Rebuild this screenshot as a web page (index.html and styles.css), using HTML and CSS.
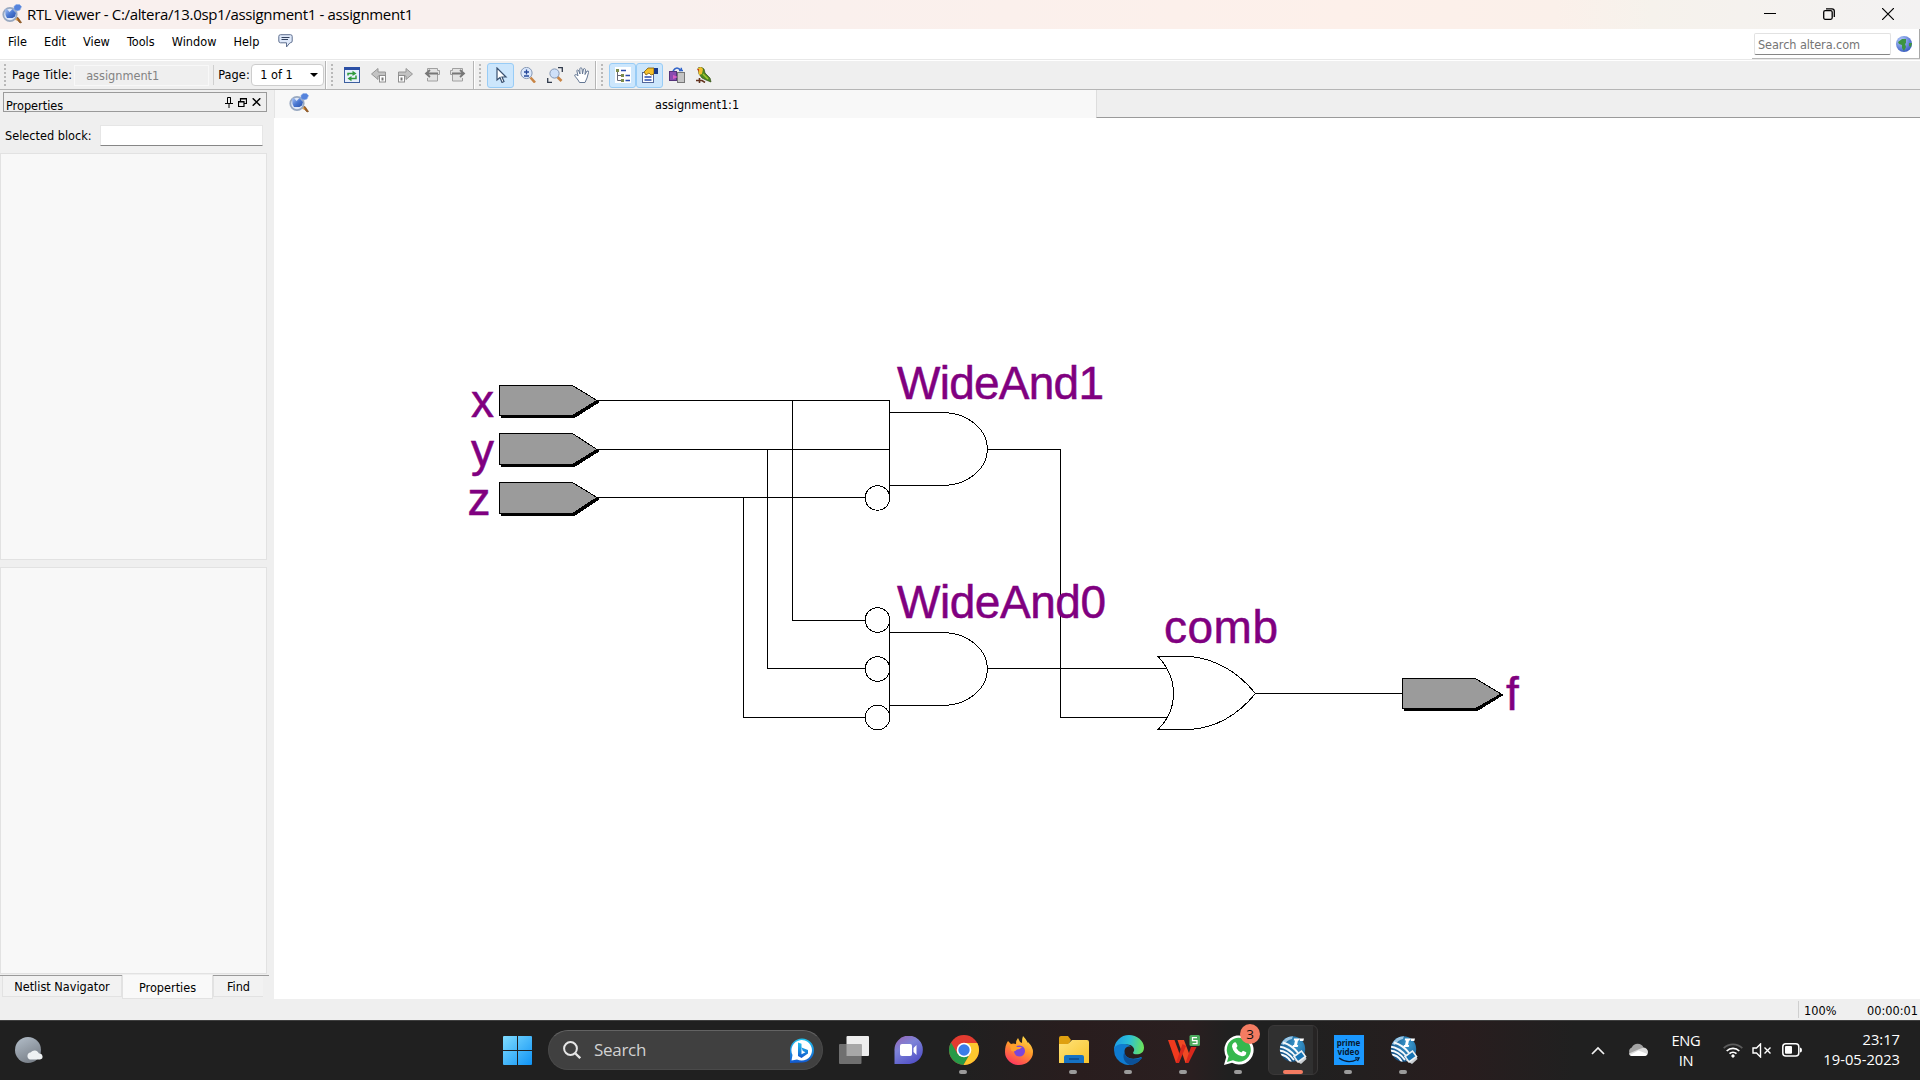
FILE: index.html
```html
<!DOCTYPE html>
<html lang="en">
<head>
<meta charset="utf-8">
<title>RTL Viewer - C:/altera/13.0sp1/assignment1 - assignment1</title>
<link rel="stylesheet" href="styles.css">
</head>
<body>
<svg class="defs" width="0" height="0">
  <defs>
    <linearGradient id="gBlue" x1="0" y1="0" x2="1" y2="1"><stop offset="0" stop-color="#a9c4f5"/><stop offset=".5" stop-color="#4a78d2"/><stop offset="1" stop-color="#2a52ab"/></linearGradient>
    <linearGradient id="gWin" x1="0" y1="0" x2="1" y2="1"><stop offset="0" stop-color="#7fdcff"/><stop offset="1" stop-color="#0f93f5"/></linearGradient>
    <linearGradient id="gChat" x1="0" y1="0" x2=".6" y2="1"><stop offset="0" stop-color="#9a62b0"/><stop offset=".45" stop-color="#7d83d8"/><stop offset="1" stop-color="#5453c8"/></linearGradient>
    <linearGradient id="gFolder" x1="0" y1="0" x2="1" y2="1"><stop offset="0" stop-color="#ffe27a"/><stop offset="1" stop-color="#f8c42c"/></linearGradient>
    <linearGradient id="gEdge" x1="0" y1=".3" x2="1" y2=".4"><stop offset="0" stop-color="#1c9be6"/><stop offset=".5" stop-color="#2cc0d8"/><stop offset="1" stop-color="#6be35a"/></linearGradient>
    <linearGradient id="gFox" x1=".8" y1="0" x2=".3" y2="1"><stop offset="0" stop-color="#ffe14a"/><stop offset=".45" stop-color="#ff9a2a"/><stop offset="1" stop-color="#ff3560"/></linearGradient>
    <linearGradient id="gMoon" x1="0" y1="0" x2=".5" y2="1"><stop offset="0" stop-color="#b4bfca"/><stop offset="1" stop-color="#7b828b"/></linearGradient>
    <linearGradient id="gBing" x1="0" y1="0" x2="0" y2="1"><stop offset="0" stop-color="#22c3ee"/><stop offset="1" stop-color="#1157cf"/></linearGradient>
    <radialGradient id="gBall" cx=".65" cy=".3" r=".8"><stop offset="0" stop-color="#3a9bd0"/><stop offset="1" stop-color="#0d4379"/></radialGradient>
    <radialGradient id="gGlobe" cx=".35" cy=".3" r=".8"><stop offset="0" stop-color="#b9d0ff"/><stop offset="1" stop-color="#2d51bd"/></radialGradient>
    <clipPath id="ballClip"><circle cx="13.500" cy="13" r="12.700"/></clipPath>
  </defs>
  <symbol id="rtl" viewBox="0 0 20 20">
    <path d="M13.500 14l4.500 5 1.500-.5-3.500-5z" fill="#a8631d" stroke="#6d3d10" stroke-width=".6"/>
    <path d="M13 14l2 2" stroke="#e5a650" stroke-width="2"/>
    <circle cx="8" cy="10.500" r="6.700" fill="#dfe8f8" stroke="#98a8c0" stroke-width="1.800"/>
    <path d="M3 5.500h2.500l2 2.500L10.500 5l3.500 4-1 3.500-2.500 1.500H5L3.500 11z" fill="url(#gBlue)"/>
    <path d="M12 2.500L14 .5h3.500l2 2L18 6l-3 1-3-1.500z" fill="#5583dc" stroke="#8eafe8" stroke-width=".6"/>
  </symbol>
  <symbol id="quartus" viewBox="0 0 28 28">
    <g clip-path="url(#ballClip)">
      <path d="M0 0h28v28H0z" fill="url(#gBall)"/>
      <path d="M2 8Q6 0 14 0l-1 3Q8 4 5 9z" fill="#9cc6e2"/>
      <path d="M-1 10.500Q9 11 17 21M-1 14.500Q8 14.500 15 24M0 18.500Q8 18.500 12 26M4 6.500Q13 9 19 17" stroke="#f4f8fb" stroke-width="1.900" fill="none"/>
    </g>
    <path d="M15 2.500h5.500l-.5 2h-1L18 9h1.200l-.5 2H13.500l.5-2H15L16 4.500h-1.200zM20.500 2.500h4.500l-.7 2.500H21z" fill="#fff"/>
    <path d="M16 24.500L25 17l2.500 6-5.500 5z" fill="#c9ced2"/>
    <path d="M15 20.500l7.500-5.500 4 5.500-7.500 5.500z" fill="#1673b3" stroke="#eef2f4" stroke-width="1.600"/>
  </symbol>
</svg>

<header class="titlebar">
  <svg class="app-icon" width="20" height="20"><use href="#rtl"/></svg>
  <span class="title">RTL Viewer - C:/altera/13.0sp1/assignment1 - assignment1</span>
  <div class="controls">
    <svg width="12" height="12" viewBox="0 0 12 12"><path d="M0 5.500h12" stroke="#000"/></svg>
    <svg width="12" height="12" viewBox="0 0 12 12" fill="none" stroke="#000" stroke-width="1.300"><rect x=".7" y="2.700" width="8.500" height="8.600" rx="1.500"/><path d="M3 .8h6q2.300 0 2.300 2.300V9"/></svg>
    <svg width="12" height="12" viewBox="0 0 12 12"><path d="M0 0l12 12M12 0L0 12" stroke="#000" stroke-width="1.200"/></svg>
  </div>
</header>

<div class="menubar">
  <nav class="menu">
    <span>File</span><span>Edit</span><span>View</span><span>Tools</span><span>Window</span><span>Help</span>
    <svg width="15" height="14" viewBox="0 0 15 14"><path d="M2.500.7h10q1.700 0 1.700 1.700V7q0 1.700-1.700 1.700H12L8.500 13V8.800h-6Q.8 8.700.8 7V2.400Q.8.700 2.500.7z" fill="#dfe9fa" stroke="#5f6f8f"/><path d="M3.500 3.500h8M3.500 5.500h6.500" stroke="#33425e"/></svg>
  </nav>
  <div class="websearch">
    <div class="websearch-box">Search altera.com</div>
    <svg width="16" height="16" viewBox="0 0 16 16"><circle cx="8" cy="8" r="8" fill="url(#gGlobe)"/><path d="M2 6l4-3 4 0v4l-1 1 1 3-2 4-2-3V9L3 8zM13 7l3 0-1 4-2-1z" fill="#3d9440"/></svg>
  </div>
</div>

<div class="toolbar">
  <i class="grip"></i>
  <span class="tlabel">Page Title:</span>
  <div class="field">assignment1</div>
  <i class="vsep thin"></i>
  <span class="tlabel page">Page:</span>
  <div class="combo"><span>1 of 1</span><i class="caret"></i></div>
  <i class="vsep"></i>
  <i class="grip"></i>
  <div class="group first">
    <div class="tool"><svg width="16" height="16" viewBox="0 0 16 16"><rect x=".5" y=".5" width="15" height="15" fill="#e9f0fc" stroke="#3c5f9f"/><path d="M0 0h16v3H0z" fill="#2c50a5"/><path d="M4 8.500V6.500h5M4 11.500h0M12 8.500v3H7" fill="none" stroke="#2f9a3b" stroke-width="1.500"/><path d="M8.500 3.800l4 2.700-4 2.500zM7.500 9l-4 2.500 4 2.700z" fill="#2f9a3b"/></svg></div>
    <div class="tool"><svg width="16" height="16" viewBox="0 0 16 16"><path d="M.5 7L7 1.500V5h7.500v4H7v3.500z" fill="#c3c3c3" stroke="#969696"/><rect x="8.500" y="8.500" width="6" height="6.500" fill="#fff" stroke="#8d8d8d"/><path d="M10.500 10.500h2v3h-2z" fill="#777"/></svg></div>
    <div class="tool"><svg width="16" height="16" viewBox="0 0 16 16"><path d="M15.500 7L9 1.500V5H1.500v4H9v3.500z" fill="#c3c3c3" stroke="#969696"/><rect x="1.500" y="8.500" width="6" height="6.500" fill="#fff" stroke="#8d8d8d"/><path d="M3.500 10.500h2v3h-2z" fill="#777"/></svg></div>
    <div class="tool"><svg width="16" height="16" viewBox="0 0 16 16"><path d="M3.500 4V1.500h10v2h2v4h-2V14h-10v-3" fill="#e3e3e3" stroke="#a0a0a0"/><path d="M1.500 6.500H14M6 3L2 6.500 6 10" fill="none" stroke="#777" stroke-width="1.800"/></svg></div>
    <div class="tool"><svg width="16" height="16" viewBox="0 0 16 16"><path d="M12.500 4V1.500h-10v2h-2v4h2V14h10v-3" fill="#e3e3e3" stroke="#a0a0a0"/><path d="M14.500 6.500H2M10 3l4 3.500-4 3.500" fill="none" stroke="#777" stroke-width="1.800"/></svg></div>
  </div>
  <i class="vsep"></i>
  <i class="grip"></i>
  <div class="group second">
    <div class="tool on"><svg width="16" height="16" viewBox="0 0 16 16"><path d="M4 1v12l3-2.500 2 5 2-1-2-4.500h4z" fill="#fff" stroke="#39506f" stroke-width="1.200"/></svg></div>
    <div class="tool"><svg width="16" height="16" viewBox="0 0 16 16"><path d="M10.500 10.500l4.500 5" stroke="#c98545" stroke-width="2.600"/><circle cx="6.500" cy="6" r="5.600" fill="#dbe8fb" stroke="#8497b5"/><path d="M4 5h5M6.500 2.500v5M4 9h5" stroke="#25489b" stroke-width="1.300"/></svg></div>
    <div class="tool"><svg width="16" height="16" viewBox="0 0 16 16"><path d="M10.500 10l4 4" stroke="#c98545" stroke-width="2.600"/><circle cx="7.500" cy="6.500" r="4.600" fill="#cfe0f8" stroke="#8497b5"/><path d="M11 .7h4.300V5M.7 11v4.300H5" fill="none" stroke="#303a4b" stroke-width="1.300"/></svg></div>
    <div class="tool"><svg width="16" height="16" viewBox="0 0 16 16"><path d="M5.500 15.500C4 12 .5 9.500.7 8 2 6.800 3.200 8.200 4 9L2.800 3.500Q3.800 2 4.800 4L6 7 5.800 1.500Q7 0 8 1.500L8.500 7l1-5Q11 1 11.500 2.500L11 7.500l2-3.500Q15 3.500 14.500 5.500L13 11l-2 4.500z" fill="#fff" stroke="#647793"/></svg></div>
  </div>
  <i class="vsep"></i>
  <i class="grip"></i>
  <div class="group third">
    <div class="tool on"><svg width="16" height="16" viewBox="0 0 16 16"><path d="M0 0h16v16H0z" fill="#fff"/><path d="M2.500 4v9.500H6M2.500 8.500H6" fill="none" stroke="#667"/><path d="M1 2h3v3H1zM6 7h3v3H6zM6 12h3v3H6z" fill="#7c8c4c"/><path d="M6 3.500h5M10.500 8.500H15M10.500 13.500H15" stroke="#2a4cae" stroke-width="1.500"/></svg></div>
    <div class="tool on"><svg width="16" height="16" viewBox="0 0 16 16"><rect x=".5" y="5.500" width="11" height="10" fill="#fff" stroke="#53679b"/><path d="M2.500 10h7M2.500 13h7" stroke="#2a4cae" stroke-width="1.300"/><path d="M2 5l4-4h6v6l-3 1-2-2-3 2z" fill="#f3bf2b" stroke="#7c5a10" stroke-width=".8"/><path d="M12 1h4v6h-4z" fill="#173a8b"/></svg></div>
    <div class="tool"><svg width="16" height="16" viewBox="0 0 16 16"><rect x=".5" y="4.500" width="7" height="9" fill="#8a4bb0" stroke="#54327a"/><rect x="8.500" y="5.500" width="7" height="10" fill="#c4c4c4" stroke="#777"/><path d="M4 4q4-6 8 0M10 3.500h4M12.300 4V.8" fill="none" stroke="#3365c9" stroke-width="1.500"/><path d="M4 8l5 2-5 2z" fill="#d75cc3"/></svg></div>
    <div class="tool"><svg width="16" height="16" viewBox="0 0 16 16"><path d="M2 1l3-1 3 2 1 4 5 5 1 4-5-2-4-2-3-4z" fill="#4c8a1f" stroke="#314a12" stroke-width=".7"/><path d="M2 1l3-1 2 2-1 5-3 1z" fill="#f0c030"/><path d="M1 2l2 0v3z" fill="#c43c1a"/><path d="M0 13.500h6l3 2M3.500 11v5" stroke="#63331f" stroke-width="1.600" fill="none"/><path d="M7 7l5 5" stroke="#a5c92d" stroke-width="1.500"/></svg></div>
  </div>
</div>

<main class="work">
  <aside class="dock">
    <div class="dock-title"><span>Properties</span>
      <div class="dock-btns">
        <svg width="8" height="11" viewBox="0 0 8 11"><path d="M2.500 6.500v-6h3v6M0 6.500h8M4 7v4M5.500.5v6" fill="none" stroke="#000"/></svg>
        <svg width="9" height="9" viewBox="0 0 9 9"><path d="M2.500 3V.5h6v5H6M2.500 1h6M.5 3.500h5.500v5H.5zM.5 4h5.500" fill="none" stroke="#000" stroke-width="1.200"/></svg>
        <svg width="9" height="8" viewBox="0 0 9 8"><path d="M.7.300l7.600 7.400M8.300.3L.7 7.700" stroke="#000" stroke-width="1.500"/></svg>
      </div>
    </div>
    <div class="selected"><span>Selected block:</span><div class="selected-box"></div></div>
    <div class="pane"></div>
    <div class="pane"></div>
    <div class="dock-tabs"><span class="t1">Netlist Navigator</span><span class="t2">Properties</span><span class="t3">Find</span></div>
  </aside>
  <section class="view">
    <div class="tabs">
      <div class="tab"><svg width="20" height="20"><use href="#rtl"/></svg><span>assignment1:1</span></div>
      <div class="tabs-rest"></div>
    </div>
    <svg class="schematic" width="1646" height="881" viewBox="274 118 1646 881">
      <g class="wires">
        <path d="M597 400.500H889.500M597 449.500H889.500M597 497.500H865.500"/>
        <path d="M792.500 400.500V620.500H865.500M767.500 449.500V668.500H865.500M743.500 497.500V717.500H865.500"/>
        <path d="M987.500 449.500H1060.500V717.500H1167M987.500 668.500H1167M1255 693.500H1402"/>
      </g>
      <g class="gates">
        <path d="M889.500 400V500M889.500 412.500H942C969 412.500 987.500 430 987.500 449S969 485.500 942 485.500H889.500"/>
        <path d="M889.500 617V720M889.500 632.500H942C969 632.500 987.500 650 987.500 669S969 705.500 942 705.500H889.500"/>
        <circle cx="877.500" cy="498" r="12.300"/>
        <circle cx="877.500" cy="620" r="12.300"/>
        <circle cx="877.500" cy="669" r="12.300"/>
        <circle cx="877.500" cy="717.500" r="12.300"/>
        <path d="M1158 656.500H1190Q1228 660 1255.500 693.500Q1228 727 1190 729.500H1158Q1173.500 714 1173.500 693.500T1158 656.500Z"/>
      </g>
      <g class="pins">
        <path class="shade" d="M501.500 387.500H574.500L599 402L574.500 417.500H501.500ZM501.500 435.500H574.500L599 451L574.500 466.500H501.500ZM501.500 484.500H574.500L599 499L574.500 515.500H501.500ZM1404.500 680.500H1477.500L1502.500 695L1477.500 710.500H1404.500Z"/>
        <path class="face" d="M499.500 385.500H572.500L597 400.500L572.500 415.500H499.500ZM499.500 433.500H572.500L597 449.500L572.500 464.500H499.500ZM499.500 482.500H572.500L597 497.500L572.500 513.500H499.500ZM1402.500 678.500H1475.500L1501 694L1475.500 708.500H1402.500Z"/>
      </g>
      <g class="names">
        <text x="471" y="417">x</text>
        <text x="471" y="466">y</text>
        <text x="467.500" y="515">z</text>
        <text x="897" y="399" textLength="207">WideAnd1</text>
        <text x="897" y="618" textLength="209">WideAnd0</text>
        <text x="1164" y="643" textLength="114">comb</text>
        <text x="1506" y="710">f</text>
      </g>
    </svg>
  </section>
</main>

<footer class="status"><span class="zoom">100%</span><span class="time">00:00:01</span></footer>

<div class="taskbar">
  <svg class="weather" width="28" height="26" viewBox="0 0 28 26"><circle cx="13" cy="13" r="13" fill="url(#gMoon)"/><path d="M15 22.500a3.600 3.600 0 0 1 .5-7 5 5 0 0 1 8.500 1 3 3 0 0 1 1 6z" fill="#eef1f3"/></svg>
  <svg class="start" width="29" height="29" viewBox="0 0 29 29"><path d="M0 1q0-1 1-1h13v14H0zM15 0h13q1 0 1 1v13H15zM0 15h14v14H1q-1 0-1-1zM15 15h14v13q0 1-1 1H15z" fill="url(#gWin)"/></svg>
  <div class="search">
    <svg width="18" height="18" viewBox="0 0 18 18" fill="none" stroke="#e6e6e6" stroke-width="2"><circle cx="7.500" cy="7.500" r="6.400"/><path d="M12.200 12.200L17.200 17.200" stroke-width="2.300"/></svg>
    <span>Search</span>
    <svg width="26" height="25" viewBox="0 0 26 25"><path d="M1 25V12.500A12 12 0 1 1 13 24.500z" fill="url(#gBing)"/><path d="M2.500 22.500L3.500 17A10.300 10.300 0 1 1 8 21.500z" fill="#fff"/><path d="M9 4.500l3.500 1.200v10.500l4-2-2.700-1.300-1.300-3.400L19 12v3.500l-6.500 4.500L9 18z" fill="url(#gBing)"/></svg>
  </div>
  <div class="apps">
    <div class="app quiet"><svg width="30" height="28" viewBox="0 0 30 28"><rect x="7.500" width="22.500" height="20" rx="1" fill="#ededed"/><rect y="8" width="22.500" height="20" rx="1" fill="#6f6f6f"/><path d="M7.500 8h15v12h-15z" fill="#a7a7a7"/></svg></div>
    <div class="app quiet"><svg width="29" height="28" viewBox="0 0 29 28"><path d="M.5 28V15A14.200 14.200 0 1 1 14 28z" fill="url(#gChat)"/><rect x="6" y="8" width="12" height="12" rx="2" fill="#fff"/><path d="M19.500 12l3-3v10l-3-3z" fill="#fff"/></svg></div>
    <div class="app"><svg width="30" height="30" viewBox="0 0 30 30"><circle cx="15" cy="15" r="15" fill="#e23b30"/><path d="M8.500 18.800L2 7.500A15 15 0 0 0 14.500 30L21 19z" fill="#269a47"/><path d="M15 8h13.300A15 15 0 0 1 14.500 30L21.500 18z" fill="#fdc72e"/><circle cx="15" cy="15" r="7.300" fill="#fff"/><circle cx="15" cy="15" r="5.700" fill="#3a7de8"/></svg></div>
    <div class="app quiet"><svg width="28" height="29" viewBox="0 0 28 29"><path d="M3 5l3 3q2-1 5 0Q11 4 13 2l2 4 2 1Q17 2 18 0q3 3 5 7V6q5 5 5 10a14 13 0 0 1-28 0Q0 9 3 5z" fill="url(#gFox)"/><circle cx="14.500" cy="15" r="5.500" fill="#7b46db"/><path d="M5 9q5-1 7 2l5 0q-2 2.500-5 2.500-3 3.500-6 1z" fill="#ffa12c"/></svg></div>
    <div class="app"><svg width="30" height="28" viewBox="0 0 30 28"><path d="M0 2q0-2 2-2h7l3 4-3 5H0z" fill="#dfa010"/><path d="M0 8h9l4-4h15q2 0 2 2v21H0z" fill="url(#gFolder)"/><path d="M5 21q0-2 2-2h16q2 0 2 2v6H5z" fill="#1672c4"/><path d="M10 23h10" stroke="#0b4a8c" stroke-width="1.500"/></svg></div>
    <div class="app"><svg width="30" height="30" viewBox="0 0 30 30"><path d="M15 0C23 0 30 6 30 12.500S24 20 20 19c-1.500-1-1-1.500 0-3 1-3-2-6.500-7-6.500C6 9.500 0 13 0 15A15 15 0 0 1 15 0z" fill="url(#gEdge)"/><path d="M0 15C0 8 13 7.500 17 11.500c-4-.5-6.500 1.500-6.500 5 0 6 7 9.500 16.500 5.500 1 0 1 1 0 2A15 15 0 0 1 0 15z" fill="#0f7bd0"/><path d="M10.500 17C8 22 10 27 15.500 30A15 15 0 0 0 28 22.500C19 26.500 11 23 10.500 17z" fill="#0b5199"/></svg></div>
    <div class="app"><svg width="32" height="30" viewBox="0 0 32 30"><path d="M0 5h6.500l5.500 15-2 8H8z" fill="#f03a1e"/><path d="M9.500 5H16l6 16-2.500 7h-2z" fill="#f04a24"/><path d="M14.500 9L8 28h3l7-17zM23 12h5.500l-8 16h-3z" fill="#d9281c"/><rect x="21.500" y="0" width="10.500" height="11" rx="1.500" fill="#4cab5e"/><path d="M29 2.700h-4.500v3h4.500v3h-4.500" fill="none" stroke="#fff" stroke-width="1.300"/></svg></div>
    <div class="app"><svg width="30" height="30" viewBox="0 0 30 30"><path d="M0 30l2.200-8A14.600 14.600 0 1 1 8 27.800z" fill="#fff"/><path d="M3 27l1.700-5.700A12 12 0 1 1 9 25.300z" fill="#35b84e"/><path d="M9.500 8q2-1.500 3 .5l1 2.500-1.200 2q2 3.500 5 4.500l1.700-1.700 3.300 1.500q0 4-4.300 3.900Q9.500 19.500 8 11.500q0-2.500 1.500-3.500z" fill="#fff"/></svg><b class="badge">3</b></div>
    <div class="app active"><svg width="28" height="28"><use href="#quartus"/></svg></div>
    <div class="app"><div class="prime"><span>prime</span><span>video</span><svg width="22" height="6" viewBox="0 0 22 6"><path d="M1 1q9 6.500 18 1.500M17 .8h4L19.500 4" fill="none" stroke="#071a33" stroke-width="1.300"/></svg></div></div>
    <div class="app"><svg width="28" height="28"><use href="#quartus"/></svg></div>
  </div>
  <div class="tray">
    <svg class="chev" width="14" height="9" viewBox="0 0 14 9"><path d="M1 8l6-6 6 6" fill="none" stroke="#f2f2f2" stroke-width="1.700"/></svg>
    <svg class="cloud" width="20" height="14" viewBox="0 0 20 14"><path d="M4.500 13A4.500 4.500 0 0 1 3.800 4.500 6.500 6.500 0 0 1 15.500 4.500 4.300 4.300 0 0 1 16 13z" fill="#a3a3a3"/><path d="M3 13q-2-.8-2-2.500L11.500 6l4-1.300Q19.500 5 20 9q-.3 4-4 4z" fill="#ddd"/><path d="M2 12l8.500-4.500L19.500 11q-.8 2-3.500 2H4z" fill="#fff"/></svg>
    <span class="lang">ENG<br>IN</span>
    <svg class="wifi" width="20" height="16" viewBox="0 0 20 16" fill="none" stroke="#fff" stroke-width="1.700"><path d="M.7 6.200a13.200 13.200 0 0 1 18.600 0" stroke="#5c5c5c"/><path d="M3.700 9a9 9 0 0 1 12.600 0M6.500 11.700a5 5 0 0 1 7 0"/><circle cx="10" cy="14" r="1.200" fill="#fff" stroke-width="1"/></svg>
    <svg class="sound" width="20" height="15" viewBox="0 0 20 15" fill="none" stroke="#fff" stroke-width="1.400"><path d="M1 5h3.500L8.500 1v13l-4-4H1z"/><path d="M12.500 4.500l6 6M18.500 4.500l-6 6"/></svg>
    <svg class="battery" width="20" height="14" viewBox="0 0 20 14"><rect x=".8" y=".8" width="16" height="12.200" rx="3" fill="none" stroke="#fff" stroke-width="1.500"/><rect x="3" y="3" width="7" height="7.800" rx="1" fill="#fff"/><path d="M18 4.500q2 0 2 2.500t-2 2.500z" fill="#fff"/></svg>
    <span class="clock">23:17<br>19-05-2023</span>
  </div>
</div>
</body>
</html>
```

FILE: styles.css
```css
* { box-sizing: border-box; }
body {
  margin: 0;
  width: 1920px;
  height: 1080px;
  overflow: hidden;
  display: flex;
  flex-direction: column;
  background: #efefef;
  color: #000;
  font: 12.6px/16px "DejaVu Sans Condensed", "DejaVu Sans", sans-serif;
  font-stretch: condensed;
}
svg { display: block; flex: none; }
span { white-space: nowrap; }
i { display: block; flex: none; }
.defs { position: absolute; }

.titlebar {
  height: 29px;
  display: flex;
  align-items: center;
  padding: 0 0 1px 2px;
  background: linear-gradient(90deg, #f9f0ee 0, #f9f0ee 35%, #fdf0ea 70%, #fbf0ea 81%, #f6f2ec 86%, #f3f2f2 100%);
}
.title { margin-left: 5px; font: 15px/20px "Open Sans", "Noto Sans", sans-serif; letter-spacing: -.34px; }
.controls { margin-left: auto; display: flex; gap: 47px; padding-right: 26px; }

.menubar { height: 32px; display: flex; background: #fff; border-bottom: 1px solid #fff; box-shadow: inset 0 -1px #e8e8e8; }
.menu { display: flex; gap: 17.1px; padding: 5px 0 0 8px; }
.menu svg { margin-left: 2px; }
.websearch { margin-left: auto; width: 168px; height: 30px; display: flex; align-items: center; gap: 5px; padding-left: 2px; border-right: 1px solid #a8a8a8; border-bottom: 1px solid #b8b8b8; }
.websearch-box { width: 137px; height: 22px; padding: 3px 3px 0; border: 1px solid #e2e2e2; border-bottom-color: #868686; border-radius: 2px; color: #757575; white-space: nowrap; letter-spacing: -.08px; }

.toolbar { height: 29px; display: flex; align-items: center; border-bottom: 1px solid #b5b5b5; }
.grip { width: 2px; height: 22px; margin-left: 4px; background: repeating-linear-gradient(#b9b9b9 0 2px, transparent 2px 4px); }
.tlabel { margin-left: 6px; letter-spacing: .1px; }
.field { width: 135px; height: 21px; margin-left: 2px; padding: 2px 11px; border: 1px solid #f8f8f8; color: #838383; }
.vsep { width: 2px; height: 28px; background: linear-gradient(90deg, #b5b5b5 50%, #fff 50%); }
.vsep.thin { width: 1px; height: 20px; margin-left: 4px; background: #cfcfcf; }
.tlabel.page { margin-left: 4px; width: 33px; }
.combo { width: 73px; height: 22px; margin-right: 1px; padding: 0 5px 0 8px; display: flex; align-items: center; justify-content: space-between; background: #fff; border: 1px solid #cdcdcd; border-radius: 4px; }
.caret { border: 4px solid transparent; border-top-color: #000; border-bottom: 0; }
.group { display: flex; }
.group.first { padding-left: 5px; width: 140px; }
.group.second { padding-left: 6px; width: 114px; }
.group.third { padding-left: 6px; }
.tool { width: 27px; height: 25px; display: flex; align-items: center; justify-content: center; flex: none; }
.first .tool:nth-child(n+3) { margin-left: -.5px; }
.tool.on { background: #cce6fc; border: 1px solid #98ccf6; border-radius: 3px; }

.work { height: 909px; display: flex; }
.dock { width: 274px; display: flex; flex-direction: column; padding-top: 2px; }
.dock-title { width: 264px; height: 20px; margin-left: 3px; padding: 0 5px 0 2px; border: 1px solid #9a9a9a; display: flex; justify-content: space-between; align-items: center; flex: none; }
.dock-title span { padding-top: 7px; }
.dock-btns { display: flex; align-items: center; gap: 5px; }
.selected { height: 41px; flex: none; display: flex; align-items: center; justify-content: space-between; padding: 6px 11px 0 5px; }
.selected-box { width: 163px; height: 21px; background: #fff; border: 1px solid #e6e6e6; border-bottom-color: #868686; }
.pane { width: 267px; height: 407px; margin-bottom: 7px; background: #f8f8f8; border: 1px solid #e2e2e2; flex: none; }
.pane + .pane { margin-bottom: 0; }
.dock-tabs { width: 269px; height: 24px; margin-top: 1px; display: flex; align-items: flex-start; border-top: 1px solid #9a9a9a; padding-left: 2px; flex: none; }
.dock-tabs span { height: 21px; padding-top: 3px; text-align: center; background: #f2f2f2; border: 1px solid #e2e2e2; border-top: 0; }
.dock-tabs .t1 { width: 120px; }
.dock-tabs .t2 { width: 91px; height: 24px; margin-top: -1px; padding-top: 5px; background: #f9f9f9; }
.dock-tabs .t3 { width: 50px; border-right: 0; }

.view { width: 1646px; }
.tabs { height: 28px; display: flex; }
.tab { width: 822px; display: flex; align-items: center; padding: 0 0 2px 14px; background: #f8f8f8; border-left: 1px solid #e4e4e4; }
.tab span { margin: 3px 0 0 346px; }
.tab svg { margin-bottom: 1px; }
.tabs-rest { flex: 1; border-bottom: 1px solid #9a9a9a; border-left: 1px solid #ddd; }
.schematic { background: #fff; shape-rendering: crispEdges; }
.wires path { fill: none; stroke: #000; }
.gates path { fill: none; stroke: #000; }
.gates circle { fill: #fff; stroke: #000; }
.shade { fill: #000; stroke: #000; }
.face { fill: #9b9b9b; stroke: #000; }
.names { font: 46px "Liberation Sans", Arial, sans-serif; fill: #800080; stroke: #800080; stroke-width: .5px; }

.status { height: 21px; display: flex; justify-content: flex-end; padding: 2px 2px 2px 0; }
.status .zoom { width: 69px; padding-left: 5px; border-left: 1px solid #cfcfcf; padding-top: 2px; }
.status .time { padding-top: 2px; }

.taskbar { height: 60px; display: flex; align-items: center; border-top: 1px solid #3f3f3f; padding-bottom: 1px; background: linear-gradient(90deg, #202020 0 50%, #291d1e 56%, #2a1f20 62%, #202020 64% 68%, #231f1f 71%, #281d1e 76%, #202020 82%); font-family: "Open Sans", "Noto Sans", sans-serif; font-stretch: normal; color: #fff; }
.weather { margin: 0 0 0 15px; }
.start { margin-left: 460px; }
.search { width: 275px; height: 40px; margin-left: 16px; padding: 0 7px 0 14px; display: flex; align-items: center; border-radius: 20px; background: #404040; border: 1px solid #4a4a4a; border-top-color: #636363; }
.search span { margin-left: 13px; font-size: 17px; line-height: 22px; letter-spacing: -.3px; color: #d2d2d2; }
.search svg:last-child { margin-left: auto; }
.apps { display: flex; margin-left: 3px; }
.app { position: relative; width: 55px; height: 50px; display: flex; align-items: center; justify-content: center; }
.app::after { content: ""; position: absolute; left: 23px; bottom: 1px; width: 8px; height: 4px; border-radius: 2px; background: #9b9b9b; }
.app.quiet::after { display: none; }
.app.active { width: 50px; margin: 0 3px 0 2px; border-radius: 6px; background: linear-gradient(90deg, #303030 44px, #262424 44px); border: 1px solid #3a3838; padding-right: 1px; }
.app.active::after { left: 14px; bottom: 0; width: 20px; background: #f47c62; }
.badge { position: absolute; left: 29px; top: -1px; width: 20px; height: 20px; border-radius: 50%; background: #f47c62; color: #111; font-weight: 400; font-size: 13.5px; line-height: 20px; text-align: center; }
.prime { width: 30px; height: 30px; display: flex; flex-direction: column; align-items: center; background: #1a98ff; color: #071a33; font-family: "Noto Sans", sans-serif; font-size: 8px; line-height: 8px; font-weight: 700; padding-top: 4px; }
.prime span { height: 9px; }
.tray { margin-left: auto; display: flex; align-items: center; padding-right: 20px; font-size: 14.7px; line-height: 20px; }
.cloud { margin-left: 23px; }
.lang { margin: 0 0 0 23px; text-align: center; width: 30px; letter-spacing: -.3px; }
.wifi { margin-left: 22px; }
.sound { margin-left: 9px; }
.battery { margin-left: 10px; }
.clock { width: 98px; text-align: right; margin-top: -2px; }
```
